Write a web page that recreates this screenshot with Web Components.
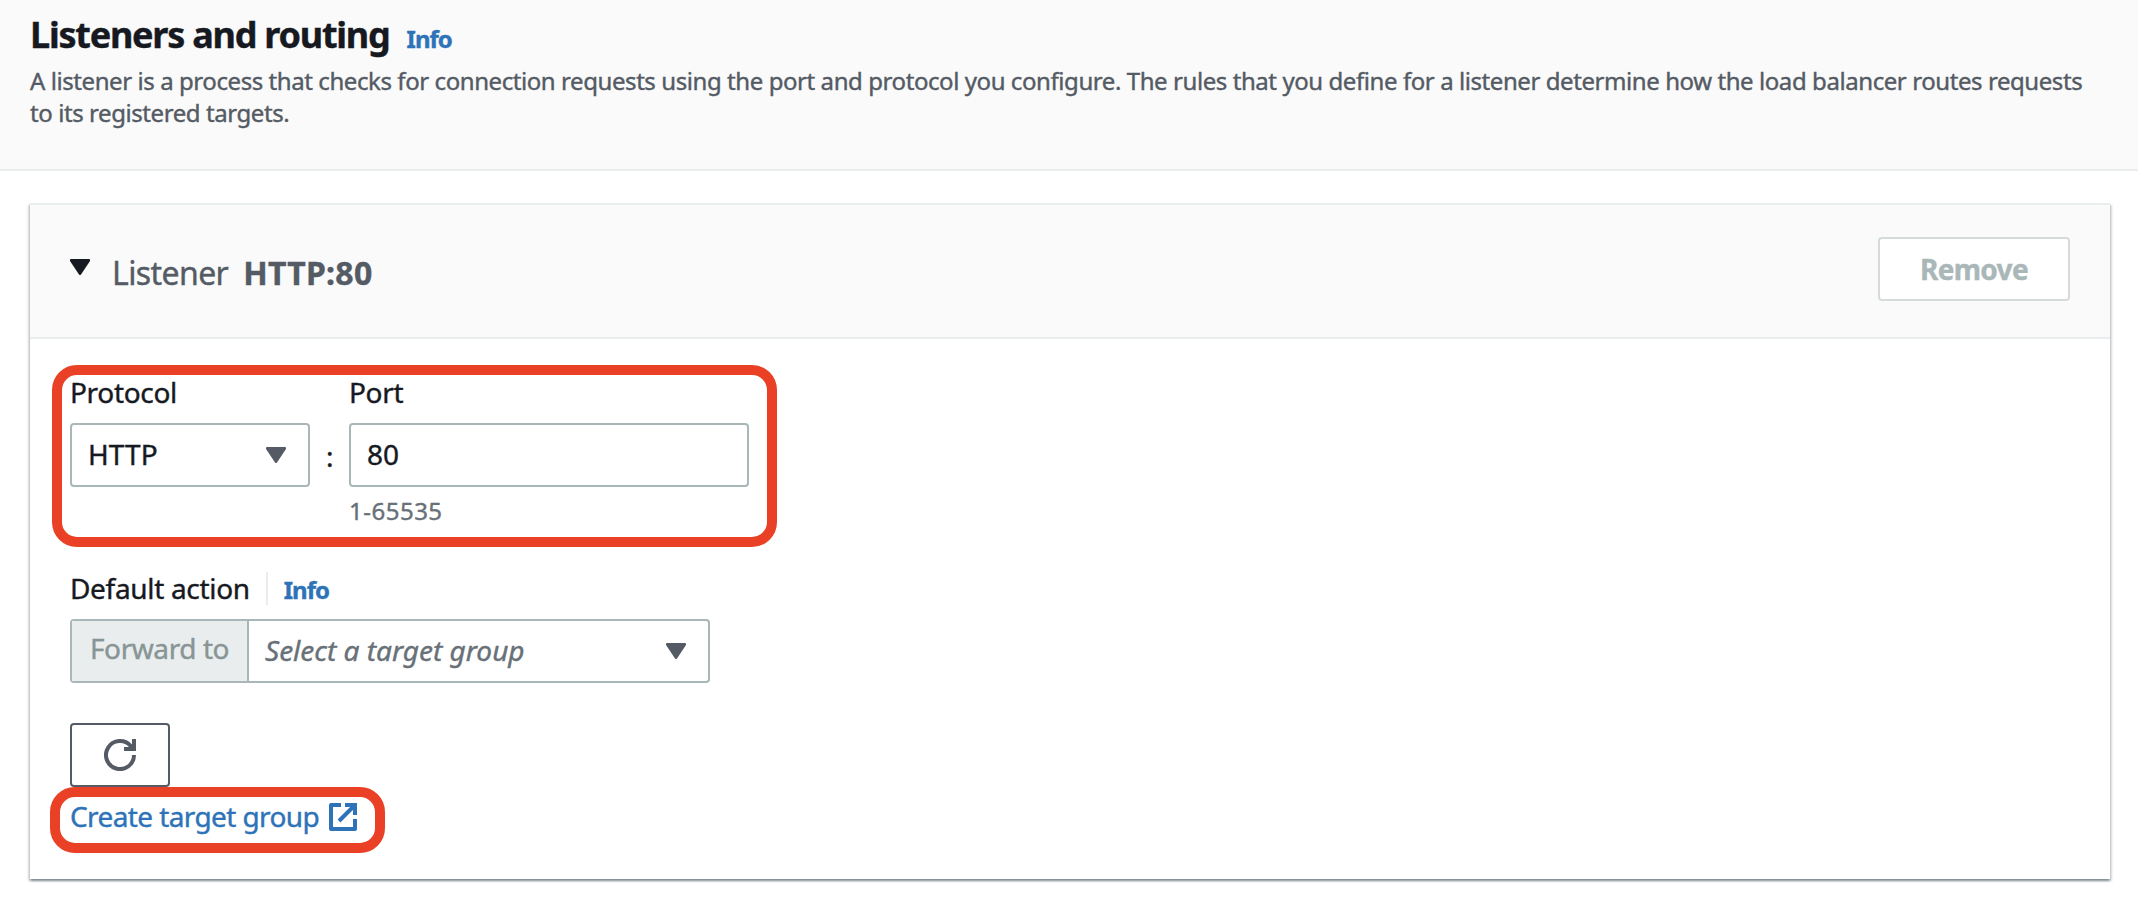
<!DOCTYPE html>
<html lang="en">
<head>
<meta charset="utf-8">
<title>Listeners and routing</title>
<style>
    body {
        display: flow-root;
        box-sizing: border-box;
        min-height: 100vh;
        margin: 0;
        background: #fff;
        color: #16191f;
        font-family: "Noto Sans", "Open Sans", sans-serif;
        font-size: 28px;
        letter-spacing: -.32px;
        white-space: nowrap;
        -webkit-text-stroke: .4px;
    }
    .fields {
        display: flex;
        align-items: flex-start;
    }
    .colon {
        width: 39px;
        margin-top: 64px;
        line-height: 36px;
        text-align: center;
    }
    .action {
        display: flex;
        align-items: baseline;
        margin: 48px 0 14px;
        height: 34px;
        line-height: 34px;
    }
    .action i {
        align-self: stretch;
        width: 2px;
        margin: 1px 16px 0;
        background: #eaeded;
    }
    icon-button {
        margin: 40px 0 11px;
    }
</style>
</head>
<body>

<template id="section-header">
    <style>
        :host {
            display: block;
            box-sizing: border-box;
            height: 171px;
            padding: 13px 30px 0;
            background: #fafafa;
            border-bottom: 2px solid #eaeded;
        }
        .title {
            display: flex;
            align-items: baseline;
            gap: 17px;
            height: 44px;
            line-height: 44px;
        }
        h2 {
            margin: 0;
            font-size: 36px;
            letter-spacing: -1.23px;
        }
        .description {
            margin-top: 8px;
            color: #545b64;
            font-size: 24px;
            line-height: 32px;
            letter-spacing: -.425px;
        }
    </style>
    <div class="title">
        <h2><slot name="title"></slot></h2>
        <slot name="info"></slot>
    </div>
    <div class="description"><slot></slot></div>
</template>

<template id="info-link">
    <style>
        :host {
            display: inline-block;
            color: #2e73b8;
            font-size: 24px;
            font-weight: 700;
            letter-spacing: -1px;
            cursor: pointer;
        }
    </style>
    <slot></slot>
</template>

<template id="listener-card">
    <style>
        :host {
            display: block;
            box-sizing: border-box;
            height: 676px;
            margin: 32px 28px 0 30px;
            border-top: 2px solid #eaeded;
            background: #fff;
            box-shadow: 0 2px 2px 0 rgba(0, 28, 36, .3), 2px 2px 2px 0 rgba(0, 28, 36, .15), -2px 2px 2px 0 rgba(0, 28, 36, .15);
        }
        header {
            display: flex;
            align-items: flex-start;
            box-sizing: border-box;
            height: 134px;
            padding: 32px 40px 0;
            background: #fafafa;
            border-bottom: 2px solid #eaeded;
            color: #545b64;
            font-size: 32px;
            line-height: 40px;
        }
        svg {
            margin: 22px 22px 0 0;
        }
        .heading {
            flex: 1;
            display: flex;
            gap: 15px;
            margin-top: 16px;
            letter-spacing: -.6px;
        }
        ::slotted(b) {
            letter-spacing: .25px;
        }
        .body {
            padding: 35px 40px 0;
        }
    </style>
    <header>
        <svg width="20" height="16" viewBox="0 0 20 16" fill="#16191f"><path d="M1 0h18q1 0 1 1v1L11 15.5q-1 1-2 0L0 2V1q0-1 1-1z"/></svg>
        <div class="heading"><slot name="label"></slot><slot name="name"></slot></div>
        <slot name="button"></slot>
    </header>
    <div class="body"><slot></slot></div>
</template>

<template id="plain-button">
    <style>
        :host {
            display: flex;
            align-items: center;
            justify-content: center;
            box-sizing: border-box;
            width: 192px;
            height: 64px;
            border: 2px solid #d5dbdb;
            border-radius: 4px;
            background: #fff;
            color: #aab7b8;
            font-size: 28px;
            font-weight: 700;
            letter-spacing: -.7px;
        }
    </style>
    <slot></slot>
</template>

<template id="icon-button">
    <style>
        :host {
            display: flex;
            align-items: center;
            justify-content: center;
            box-sizing: border-box;
            width: 100px;
            height: 64px;
            border: 2px solid #545b64;
            border-radius: 4px;
            background: #fff;
        }
    </style>
    <svg width="32" height="32" viewBox="0 0 32 32" fill="none" stroke="#545b64" stroke-width="4">
        <path d="M30 16A14 14 0 1 1 26.5 6.8L28 9"/>
        <path d="M30 0v10H20"/>
        <path d="M24 9l5-5v6z" fill="#545b64" stroke="none"/>
    </svg>
</template>

<template id="form-field">
    <style>
        :host {
            display: block;
            width: var(--width);
        }
        .label {
            height: 36px;
            line-height: 36px;
            margin-bottom: 13px;
        }
        .hint {
            height: 24px;
            margin-top: 12px;
            color: #687078;
            font-size: 24px;
            line-height: 24px;
            letter-spacing: .5px;
        }
    </style>
    <div class="label"><slot name="label"></slot></div>
    <slot></slot>
    <div class="hint"><slot name="hint"></slot></div>
</template>

<!-- One bordered box for inputs and selects, with an optional grey prefix -->
<template id="control-box">
    <style>
        :host {
            display: flex;
            box-sizing: border-box;
            width: var(--width, 100%);
            height: 64px;
            border: 2px solid #aab7b8;
            border-radius: 4px;
            background: #fff;
            line-height: 59px;
        }
        .prefix {
            display: none;
        }
        :host([prefixed]) .prefix {
            display: block;
            box-sizing: border-box;
            width: 177px;
            padding-left: 18px;
            background: #eaeded;
            border-right: 2px solid #aab7b8;
            color: #879596;
            line-height: 54px;
            letter-spacing: -.42px;
        }
        .value {
            flex: 1;
            padding-left: 16px;
            letter-spacing: .1px;
        }
        :host([placeholder]) .value {
            color: #687078;
            font-style: italic;
            letter-spacing: 0;
        }
        svg {
            display: none;
            margin: 22px 22px 0 0;
        }
        :host([dropdown]) svg {
            display: block;
        }
    </style>
    <div class="prefix"><slot name="prefix"></slot></div>
    <div class="value"><slot></slot></div>
    <svg width="20" height="16" viewBox="0 0 20 16" fill="#545b64"><path d="M1 0h18q1 0 1 1v1L11 15.5q-1 1-2 0L0 2V1q0-1 1-1z"/></svg>
</template>

<template id="external-link">
    <style>
        :host {
            display: flex;
            gap: 10px;
            height: 36px;
            color: #2e73b8;
            line-height: 36px;
            letter-spacing: -.6px;
        }
        svg {
            margin-top: 5px;
        }
    </style>
    <span><slot></slot></span>
    <svg width="28" height="28" viewBox="0 0 28 28" fill="none" stroke="currentColor" stroke-width="4">
        <path d="M12 2H2v24h24V16" stroke-linejoin="round"/>
        <path d="M16 2h10v10M26 2L10 18"/>
    </svg>
</template>

<!-- Red frame laid over the content it wraps -->
<template id="mark-box">
    <style>
        :host {
            display: block;
            position: relative;
            width: fit-content;
        }
        .frame {
            position: absolute;
            inset: var(--inset);
            border: 10px solid #ea4025;
            border-radius: 25px;
            pointer-events: none;
        }
    </style>
    <slot></slot>
    <div class="frame"></div>
</template>

<section-header>
    <span slot="title">Listeners and routing</span>
    <info-link slot="info">Info</info-link>
    A listener is a process that checks for connection requests using the port and protocol you configure. The rules that you define for a listener determine how the load balancer routes requests<br>to its registered targets.
</section-header>

<listener-card>
    <span slot="label">Listener</span>
    <b slot="name">HTTP:80</b>
    <plain-button slot="button">Remove</plain-button>

    <mark-box style="--inset: -9px -28px -24px -18px">
        <div class="fields">
            <form-field style="--width: 240px">
                <span slot="label">Protocol</span>
                <control-box dropdown>HTTP</control-box>
            </form-field>
            <div class="colon">:</div>
            <form-field style="--width: 400px">
                <span slot="label">Port</span>
                <control-box>80</control-box>
                <span slot="hint">1-65535</span>
            </form-field>
        </div>
    </mark-box>

    <div class="action"><span>Default action</span><i></i><info-link>Info</info-link></div>
    <control-box prefixed placeholder dropdown style="--width: 640px">
        <span slot="prefix">Forward to</span>
        Select a target group
    </control-box>

    <icon-button></icon-button>
    <mark-box style="--inset: -11px -28px -19px -20px">
        <external-link>Create target group</external-link>
    </mark-box>
</listener-card>

<script>
    const tags = [
        "section-header", "info-link", "listener-card", "plain-button", "icon-button",
        "form-field", "control-box", "external-link", "mark-box"
    ];

    for (const tag of tags) {
        const template = document.getElementById(tag);
        customElements.define(tag, class extends HTMLElement {
            constructor() {
                super();
                let shadowRoot = this.attachShadow({ mode: 'open' });
                shadowRoot.appendChild(template.content.cloneNode(true));
            }
        });
    }
</script>
</body>
</html>
